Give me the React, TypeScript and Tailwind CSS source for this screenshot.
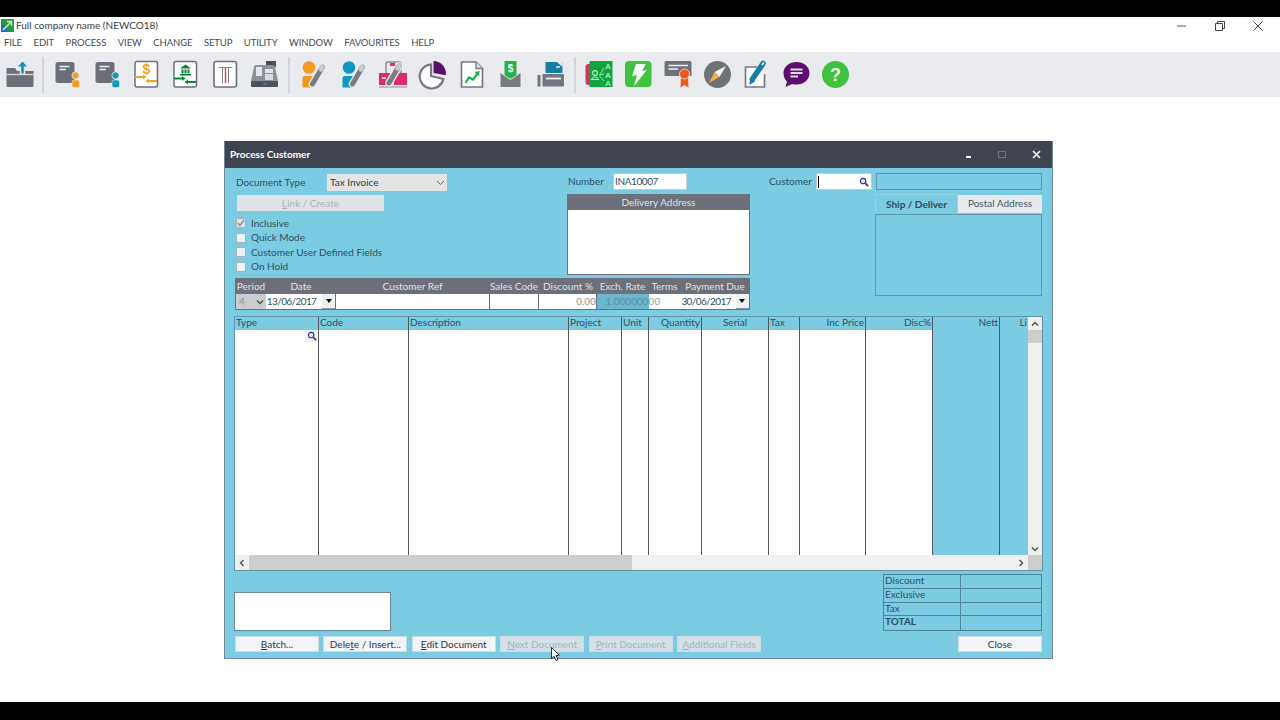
import React from 'react';

const G = '#6c6f78';

const Pencil = ({ x = 0, y = 0 }: { x?: number; y?: number }) => (
  <g transform={`translate(${x} ${y})`}>
    <path d="M16 25 L26 8" stroke="#e9ebef" strokeWidth="7.5" strokeLinecap="round" />
    <path d="M16 25 L26 8" stroke="#7b7d84" strokeWidth="5" strokeLinecap="round" />
    <path d="M24.5 10.5 L26 8" stroke="#c9cbd0" strokeWidth="4.5" strokeLinecap="round" />
  </g>
);

function DocPerson({ color }: { color: string }) {
  return (
    <>
      <rect x="3.5" y="3" width="19" height="21" rx="2.5" fill={G} />
      <path d="M7.5 7.5 H17.5 M7.5 10.5 H14" stroke="#e8eaee" strokeWidth="1.6" />
      <circle cx="23.5" cy="16.5" r="3.6" fill={color} stroke="#e9ebef" strokeWidth="0.8" />
      <rect x="20" y="21" width="7.5" height="7.5" rx="2" fill={color} stroke="#e9ebef" strokeWidth="0.6" />
    </>
  );
}

function PersonPencil({ color }: { color: string }) {
  return (
    <>
      <circle cx="11" cy="8.5" r="6.3" fill={color} />
      <path d="M4.5 19 Q4.5 17 6.5 17 H16 L14 28.5 H4.5z" fill={color} />
      <Pencil x={-1.5} y={0} />
    </>
  );
}

const icons: Record<string, React.ReactNode> = {
  folder: (
    <>
      <path d="M2.5 9 H11 L13 12 H29.5 V27 Q29.5 28 28.5 28 H3.5 Q2.5 28 2.5 27z" fill={G} />
      <path d="M2.5 15.5 H29.5" stroke="#d5d7dc" strokeWidth="1.4" />
      <path d="M18.5 15 V6" stroke="#e9ebef" strokeWidth="5.5" />
      <path d="M18.5 14.5 V6" stroke="#1a8db4" strokeWidth="2.6" />
      <path d="M14 7.5 L18.5 2.5 L23 7.5z" fill="#1a8db4" />
    </>
  ),
  docOrange: <DocPerson color="#f39a1f" />,
  docBlue: <DocPerson color="#1297bd" />,
  dollar: (
    <>
      <rect x="4" y="2.5" width="22.5" height="25.5" rx="2" fill="#fff" stroke={G} strokeWidth="1.5" />
      <text x="15.5" y="15" textAnchor="middle" fontSize="14" fontWeight="700" fill="#f2a51e" fontFamily="Liberation Sans">$</text>
      <path d="M4 18 H13 M17 22 H26" stroke="#f2a51e" strokeWidth="2" />
      <path d="M12 15.5 L15.5 18 L12 20.5z M18 19.5 L14.5 22 L18 24.5z" fill="#f2a51e" />
    </>
  ),
  bank: (
    <>
      <rect x="4" y="2.5" width="22.5" height="25.5" rx="2" fill="#fff" stroke={G} strokeWidth="1.5" />
      <path d="M10 9.5 L15.5 5.5 L21 9.5z M10 15 H21 V16.5 H10z M11.5 10.5 H13.5 V14.5 H11.5z M14.5 10.5 H16.5 V14.5 H14.5z M17.5 10.5 H19.5 V14.5 H17.5z" fill="#0b7d2e" />
      <path d="M4 19.5 H13 M17 23 H26" stroke="#0b8a32" strokeWidth="2" />
      <path d="M12 17 L15.5 19.5 L12 22z M18 20.5 L14.5 23 L18 25.5z" fill="#0b8a32" />
    </>
  ),
  tee: (
    <>
      <rect x="4" y="2.5" width="22.5" height="25.5" rx="2" fill="#fff" stroke={G} strokeWidth="1.6" />
      <path d="M8.5 8.5 H22.5 M12.5 9 V24 M18.5 9 V24" stroke="#80838a" strokeWidth="1" />
      <path d="M15.5 9 V24" stroke="#d9433f" strokeWidth="1.4" />
    </>
  ),
  till: (
    <>
      <rect x="17" y="2" width="10" height="6" fill="#4a4d55" />
      <path d="M5 8 Q5 6 7 6 H24 Q26 6 26 8 L29 22 H2z" fill="#8d9097" />
      <rect x="7" y="8" width="6" height="9" fill="#e4e6ea" />
      <rect x="16" y="10" width="8" height="4" fill="#e4e6ea" />
      <rect x="16" y="15" width="8" height="6" fill="#d8dbe0" />
      <rect x="2" y="22" width="27" height="6" rx="1" fill="#4f5259" />
      <rect x="14" y="24" width="4" height="1.6" fill="#1a8db4" />
    </>
  ),
  personOrange: <PersonPencil color="#f39a1f" />,
  personBlue: <PersonPencil color="#1297bd" />,
  boxes: (
    <>
      <rect x="9" y="3" width="15" height="12" rx="2" fill="#e6e7ea" stroke="#8a8c92" strokeWidth="1.4" />
      <rect x="13" y="4" width="5" height="3" fill="#d8316d" />
      <rect x="2" y="14" width="13" height="12" fill="#df2b6c" />
      <rect x="17" y="14" width="13" height="12" fill="#df2b6c" />
      <rect x="5" y="18" width="4" height="2" fill="#f7c8d9" />
      <path d="M2 28 H30" stroke="#8a8c92" strokeWidth="1" />
      <Pencil x={-4} y={-1} />
    </>
  ),
  pie: (
    <>
      <path d="M15 5.5 A12 12 0 1 0 27.4 20 L15 17z" fill="#fff" stroke="#77797f" strokeWidth="2.2" />
      <path d="M17.5 2 A12.5 12.5 0 0 1 29.8 16.2 L17.5 14z" fill="#5d0f6e" />
    </>
  ),
  chart: (
    <>
      <path d="M5.5 3 H20 L26.5 9.5 V28 H5.5z" fill="#fff" stroke="#777a80" strokeWidth="1.7" strokeLinejoin="round" />
      <path d="M20 3 V9.5 H26.5" fill="#dfe1e5" stroke="#777a80" strokeWidth="1.3" />
      <path d="M9.5 24 L13 18.5 L17 20.5 L22 14" stroke="#22b14c" strokeWidth="2.2" fill="none" />
      <path d="M18.5 13 L23.5 12 L23.2 17.5z" fill="#22b14c" />
    </>
  ),
  envelope: (
    <>
      <path d="M5.5 14 L15.5 21 L25.5 14 V28 H5.5z" fill="#777a80" />
      <path d="M9.5 2 H21.5 V16 L15.5 20 L9.5 16z" fill="#25b24a" />
      <text x="15.5" y="13" textAnchor="middle" fontSize="10" fontWeight="700" fill="#fff" fontFamily="Liberation Sans">$</text>
    </>
  ),
  printer: (
    <>
      <path d="M10.5 3 H27.5 V14 H10.5z" fill="#137fa6" />
      <path d="M22 3 H27.5 V8z" fill="#e9ebef" />
      <path d="M21 8 H25" stroke="#fff" strokeWidth="1.3" />
      <rect x="7.5" y="15" width="21.5" height="12.5" rx="1" fill="#72757d" />
      <rect x="2.5" y="16" width="3" height="11.5" fill="#72757d" />
      <path d="M11 19.5 H26" stroke="#f0f1f3" strokeWidth="1.8" />
    </>
  ),
  book: (
    <>
      <rect x="1.5" y="5" width="8" height="21" rx="3" fill="#c8385f" />
      <rect x="5.5" y="2" width="23" height="26" fill="#12a53e" />
      <circle cx="11" cy="14" r="2.4" fill="none" stroke="#b7f0c6" strokeWidth="1.1" />
      <path d="M7.5 20.5 Q11 15 14.5 20.5z" fill="none" stroke="#b7f0c6" strokeWidth="1.1" />
      <path d="M15.5 16 L20 9 M15.5 16 L20 15 M15.5 17 L20 22" stroke="#b7f0c6" strokeWidth="0.8" />
      <text x="24" y="10" textAnchor="middle" fontSize="8" fill="#d7f7df" fontFamily="Liberation Sans">A</text>
      <text x="24" y="18.5" textAnchor="middle" fontSize="8" fill="#d7f7df" fontFamily="Liberation Sans">A</text>
      <text x="24" y="27" textAnchor="middle" fontSize="8" fill="#d7f7df" fontFamily="Liberation Sans">A</text>
    </>
  ),
  bolt: (
    <>
      <rect x="2" y="2" width="26.5" height="26" rx="4" fill="#3ec23f" />
      <path d="M13 5 H23 L19 12 L24 11 L11 27 L14 16 L9 17z" fill="#fff" />
    </>
  ),
  cert: (
    <>
      <path d="M1.5 3.5 Q1.5 2 3 2 H27 Q28.5 2 28.5 3.5 V17 H1.5z" fill="#6f7279" />
      <path d="M5.5 6.5 H25 M5.5 10 H15" stroke="#f1f2f4" strokeWidth="1.6" />
      <path d="M18 18 L17.5 28.5 L21.5 26 L25.5 28.5 L25 18z" fill="#ec5a19" />
      <circle cx="21.5" cy="15" r="5" fill="#ec5a19" stroke="#e9ebef" strokeWidth="0.8" />
    </>
  ),
  compass: (
    <>
      <circle cx="15.5" cy="15.5" r="13.5" fill="#6f7279" />
      <path d="M24 7 L17.5 18 L12.5 13z" fill="#f4f4f4" />
      <path d="M7 24 L12.5 13 L17.5 18z" fill="#f2b04a" />
    </>
  ),
  note: (
    <>
      <path d="M16 8 H4.5 V28 H23.5 V15" fill="#fff" stroke="#777a80" strokeWidth="1.7" />
      <path d="M11.5 20 L22 4.5" stroke="#137fa6" strokeWidth="5.5" strokeLinecap="round" />
      <path d="M21 6 L22.8 3.4" stroke="#ffffff" strokeWidth="1.6" />
      <path d="M8.5 26 L8.8 19 L14 22.5z" fill="#137fa6" />
    </>
  ),
  chat: (
    <>
      <path d="M15.5 3 C8.5 3 2.5 7.5 2.5 14 C2.5 18.5 4.5 21 6 22.5 L4.5 28 L11 25 C21 27.5 28.5 21.5 28.5 14 C28.5 7.5 22.5 3 15.5 3z" fill="#5d0f6e" />
      <path d="M9.5 10.5 H21.5 M9.5 14 H21.5 M9.5 17.5 H17" stroke="#e7d6ea" strokeWidth="1.8" />
    </>
  ),
  help: (
    <>
      <circle cx="15.5" cy="15.5" r="13.5" fill="#3ec23f" />
      <text x="15.5" y="22" textAnchor="middle" fontSize="18" fontWeight="700" fill="#e8f8e4" fontFamily="Liberation Sans">?</text>
    </>
  ),
};

const toolbar = [
  ['folder'],
  ['docOrange', 'docBlue', 'dollar', 'bank', 'tee', 'till'],
  ['personOrange', 'personBlue', 'boxes', 'pie', 'chart', 'envelope', 'printer'],
  ['book', 'bolt', 'cert', 'compass', 'note', 'chat', 'help'],
];

const menus = ['FILE', 'EDIT', 'PROCESS', 'VIEW', 'CHANGE', 'SETUP', 'UTILITY', 'WINDOW', 'FAVOURITES', 'HELP'];

const columns = [
  { label: 'Type', w: 'w-[84px]', align: 'text-left' },
  { label: 'Code', w: 'w-[90px]', align: 'text-left' },
  { label: 'Description', w: 'w-[160px]', align: 'text-left' },
  { label: 'Project', w: 'w-[53px]', align: 'text-left' },
  { label: 'Unit', w: 'w-[27px]', align: 'text-left' },
  { label: 'Quantity', w: 'w-[53px]', align: 'text-right' },
  { label: 'Serial', w: 'w-[67px]', align: 'text-center' },
  { label: 'Tax', w: 'w-[31px]', align: 'text-left' },
  { label: 'Inc Price', w: 'w-[66px]', align: 'text-right' },
  { label: 'Disc%', w: 'w-[67px]', align: 'text-right' },
  { label: 'Nett', w: 'w-[67px]', align: 'text-right', teal: true },
  { label: 'Li', w: 'w-[28px]', align: 'text-right', teal: true },
];

const strip = [
  { label: 'Period', w: 'w-[30px]' },
  { label: 'Date', w: 'w-[70px]' },
  { label: 'Customer Ref', w: 'w-[153px]' },
  { label: 'Sales Code', w: 'w-[50px]' },
  { label: 'Discount %', w: 'w-[58px]' },
  { label: 'Exch. Rate', w: 'w-[51px]' },
  { label: 'Terms', w: 'w-[33px]' },
  { label: 'Payment Due', w: 'w-[68px]' },
];

const Lens = () => (
  <svg width="10" height="10" viewBox="0 0 11 11">
    <circle cx="4.5" cy="4.5" r="3" fill="#dfe8f5" stroke="#2b2f8c" strokeWidth="1.2" />
    <path d="M7 7 L10 10" stroke="#3a3f78" strokeWidth="2" />
  </svg>
);

const DropBtn = () => (
  <span className="w-[13px] h-[15px] bg-[#eef0f2] border-b border-[#8d9aa3] flex items-center justify-center">
    <span className="w-0 h-0 border-l-[3px] border-r-[3px] border-t-[4px] border-l-transparent border-r-transparent border-t-black" />
  </span>
);

const Check = ({ label, checked }: { label: string; checked?: boolean }) => (
  <label className="h-[14.5px] flex items-center gap-[5px]">
    <span className={`w-[10px] h-[10px] border border-[#a9b4ba] flex items-center justify-center ${checked ? 'bg-[#dfe1e3]' : 'bg-[#eef1f3]'}`}>
      {checked && (
        <svg width="8" height="8" viewBox="0 0 8 8"><path d="M1 4 L3 6.5 L7 1" stroke="#8a9096" strokeWidth="1.3" fill="none" /></svg>
      )}
    </span>
    <span>{label}</span>
  </label>
);

const Btn = ({ u, rest, pre = '', off, w = 'w-[84px]' }: { u: string; rest: string; pre?: string; off?: boolean; w?: string }) => (
  <button className={`${w} h-[16px] leading-[15px] border border-[#c9dde6] text-center ${off ? 'bg-[#d3e0e7] text-[#a3b3bc]' : 'bg-[#f2f3f7] text-[#2e3d47]'}`}>
    {pre}<span className="underline">{u}</span>{rest}
  </button>
);

const Chevron = ({ d }: { d: string }) => (
  <svg width="8" height="8" viewBox="0 0 8 8"><path d={d} stroke="#4b5158" strokeWidth="1.4" fill="none" /></svg>
);

export default function App() {
  return (
    <div className="w-[1280px] h-[720px] overflow-hidden bg-black flex flex-col text-[10px] text-[#31505f] font-['Lato',sans-serif] relative">
      <div className="h-[17px] shrink-0" />
      <div className="h-[17px] shrink-0 bg-white flex items-center text-[#3a3d42]">
        <svg width="13" height="13" viewBox="0 0 13 13" className="ml-[1px] mr-[2px]">
          <rect width="13" height="13" fill="#1f9b4a" />
          <rect y="6" width="6" height="7" fill="#1d6fc0" />
          <path d="M2 11 L10 3 M6 2.5 H10.5 V7" stroke="#d6f5a0" strokeWidth="1.5" fill="none" />
        </svg>
        <span>Full company name (NEWCO18)</span>
        <div className="ml-auto flex items-center text-[#4a4d52]">
          <span className="w-[38px] flex justify-center"><svg width="10" height="10" viewBox="0 0 10 10"><path d="M0 5 H9" stroke="#555" /></svg></span>
          <span className="w-[38px] flex justify-center"><svg width="10" height="10" viewBox="0 0 10 10"><path d="M0.5 2.5 H7.5 V9.5 H0.5z M2.5 2.5 V0.5 H9.5 V7.5 H7.5" stroke="#444" fill="none" /></svg></span>
          <span className="w-[38px] mr-[3px] flex justify-center"><svg width="10" height="10" viewBox="0 0 10 10"><path d="M0.5 0.5 L9.5 9.5 M9.5 0.5 L0.5 9.5" stroke="#444" /></svg></span>
        </div>
      </div>
      <div className="h-[18px] shrink-0 bg-white flex items-center gap-[11.5px] pl-[4px] text-[9.5px] tracking-[-0.1px] text-[#444a52]">
        {menus.map(m => <span key={m}>{m}</span>)}
      </div>
      <div className="h-[45px] shrink-0 bg-[#e9ebef] flex items-center">
        {toolbar.map((group, i) => (
          <React.Fragment key={i}>
            {i > 0 && (
              <div className="w-[9.7px] h-[36px] flex justify-center"><div className="w-[2px] h-full bg-[#d2d4d8]" /></div>
            )}
            {group.map((name, j) => (
              <div key={name} className={`${i === 0 && j === 0 ? 'w-[38.4px]' : 'w-[39.4px]'} h-[32px] flex items-center justify-center`}>
                <svg width="31" height="31" viewBox="0 0 31 31">{icons[name]}</svg>
              </div>
            ))}
          </React.Fragment>
        ))}
      </div>

      <div className="h-[605px] shrink-0 bg-white pt-[44px] pl-[224px]">
        <div className="w-[829px] h-[518px] flex flex-col border-x border-b border-[#6d8794] bg-[#7bcbe2]">
          <div className="h-[27px] shrink-0 bg-[#3f4450] flex items-center pl-[5px] text-white font-bold">
            <span>Process Customer</span>
            <div className="ml-auto flex items-center">
              <span className="w-[34px] flex justify-center pt-[5px]"><span className="w-[5px] h-[2px] bg-white" /></span>
              <span className="w-[34px] flex justify-center"><span className="w-[8px] h-[7px] border border-[#6f7480]" /></span>
              <span className="w-[34px] mr-[-1px] flex justify-center">
                <svg width="9" height="9" viewBox="0 0 9 9"><path d="M1 1 L8 8 M8 1 L1 8" stroke="#fff" strokeWidth="1.6" /></svg>
              </span>
            </div>
          </div>

          <div className="flex-1 flex flex-col pl-[10px] pr-[10px]">
            <div className="h-[149px] shrink-0 flex pt-[5px]">
              <div className="w-[516px] shrink-0 flex flex-col">
                <div className="h-[105px] flex">
                  <div className="w-[332px] pl-[1px] pt-[1px]">
                    <div className="h-[17px] flex items-center">
                      <span className="w-[91px]">Document Type</span>
                      <div className="w-[120px] h-[17px] bg-[#e3e4e5] flex items-center justify-between pl-[3px] pr-[2px] text-[#303a42]">
                        Tax Invoice
                        <svg width="9" height="6" viewBox="0 0 9 6"><path d="M1 1 L4.5 4.5 L8 1" stroke="#666" fill="none" /></svg>
                      </div>
                    </div>
                    <button className="mt-[4px] ml-[1px] w-[147px] h-[16px] bg-[#dfe3e6] text-[#aab2b7] text-center">
                      <span className="underline">L</span>ink / Create
                    </button>
                    <div className="mt-[5px] flex flex-col">
                      <Check label="Inclusive" checked />
                      <Check label="Quick Mode" />
                      <Check label="Customer User Defined Fields" />
                      <Check label="On Hold" />
                    </div>
                  </div>
                  <div className="w-[183px]">
                    <div className="h-[17px] flex items-center">
                      <span className="w-[46px] pl-[1px]">Number</span>
                      <div className="w-[74px] h-[17px] bg-white border border-[#c5ccd0] pl-[1px] leading-[15px] tracking-[-0.4px] text-[#31505f]">INA10007</div>
                    </div>
                    <div className="mt-[4px] border border-[#6b7079] bg-white h-[81px]">
                      <div className="h-[15px] leading-[14px] bg-[#6d6f7a] text-[#dfe2e6] text-center">Delivery Address</div>
                    </div>
                  </div>
                </div>
                <div className="w-[515px] h-[32px] border border-[#6d6f7a] bg-[#6d6f7a]">
                  <div className="flex h-[15px]">
                    {strip.map(s => (
                      <span key={s.label} className={`${s.w} text-center leading-[14px] text-[#dfe2e6] whitespace-nowrap`}>{s.label}</span>
                    ))}
                  </div>
                  <div className="flex h-[15px]">
                    <div className="w-[30px] bg-[#c9cdd1] flex items-center justify-between pl-[3px] pr-[2px] text-[#8d949a]">4<Chevron d="M1 2.5 L4 5.5 L7 2.5" /></div>
                    <div className="w-[70px] bg-white flex items-center justify-between pl-[1px] text-[#31505f]"><span className="tracking-[-0.6px]">13/06/2017</span><DropBtn /></div>
                    <div className="w-[153px] bg-white ml-[1px]" />
                    <div className="w-[49px] bg-white ml-[1px]" />
                    <div className="w-[57px] bg-white ml-[1px] text-right leading-[15px] text-[#8d949a]">0.00</div>
                    <div className="w-[52px] bg-[#6ab8d0] ml-[1px] text-right leading-[15px] text-[#5f8ea3]">1.000000</div>
                    <div className="w-[32px] bg-white leading-[15px] text-[#9aa1a6]">00</div>
                    <div className="w-[69px] bg-white flex items-center justify-between pl-[1px] text-[#31505f]"><span className="tracking-[-0.6px]">30/06/2017</span><DropBtn /></div>
                  </div>
                </div>
              </div>

              <div className="ml-[17px] w-[275px] shrink-0 flex flex-col">
                <div className="h-[17px] flex items-center">
                  <span className="w-[48px] shrink-0 pl-[1px]">Customer</span>
                  <div className="w-[56px] shrink-0 h-[17px] bg-white border border-[#c5ccd0] flex items-center justify-between pr-[2px]">
                    <span className="w-[1px] h-[12px] bg-black ml-[1px]" />
                    <Lens />
                  </div>
                  <div className="ml-[4px] w-[166px] shrink-0 h-[17px] border border-[#5f96a8]" />
                </div>
                <div className="mt-[4px] ml-[107px] flex h-[20px] items-start">
                  <div className="w-[83px] h-[20px] border border-[#94d4e6] border-b-0 text-center font-bold leading-[18px] text-[#2e4a57]">Ship / Deliver</div>
                  <div className="w-[84px] h-[18px] bg-[#e6eaf0] text-center leading-[17px] mt-[1px] text-[#46545e]">Postal Address</div>
                </div>
                <div className="ml-[107px] w-[167px] h-[82px] border border-[#5f96a8]" />
              </div>
            </div>

            <div className="mt-[-1px] h-[255px] shrink-0 w-[809px] -ml-[1px] border border-[#5f96a8] flex flex-col">
              <div className="flex-1 flex min-h-0">
                <div className="flex flex-1 min-w-0">
                  {columns.map((c, i) => (
                    <div key={c.label} className={`${c.w} shrink-0 flex flex-col border-r border-[#55585e] last:border-r-0 relative`}>
                      <div className={`h-[13px] leading-[10px] px-[1px] whitespace-nowrap ${c.align}`}>{c.label}</div>
                      <div className={`flex-1 ${c.teal ? '' : 'bg-white'}`} />
                      {i === 0 && (
                        <span className="absolute right-0 top-[13px] w-[13px] h-[12px] bg-[#eef0f2] flex items-center justify-center"><Lens /></span>
                      )}
                    </div>
                  ))}
                </div>
                <div className="w-[14px] shrink-0 bg-[#f0f0f0] flex flex-col items-center justify-between">
                  <div className="w-full flex flex-col items-center">
                    <span className="h-[13px] flex items-center"><Chevron d="M1 5.5 L4 2.5 L7 5.5" /></span>
                    <span className="w-full h-[13px] bg-[#cdcdcd]" />
                  </div>
                  <span className="h-[13px] flex items-center"><Chevron d="M1 2.5 L4 5.5 L7 2.5" /></span>
                </div>
              </div>
              <div className="h-[15px] shrink-0 bg-[#f0f0f0] flex items-center">
                <span className="w-[14px] flex justify-center"><Chevron d="M5.5 1 L2.5 4 L5.5 7" /></span>
                <span className="w-[383px] h-full bg-[#cdcdcd]" />
                <span className="ml-auto w-[14px] flex justify-center"><Chevron d="M2.5 1 L5.5 4 L2.5 7" /></span>
                <span className="w-[14px] h-full bg-[#cdcdcd]" />
              </div>
            </div>

            <div className="h-[60px] shrink-0 flex justify-between items-end -ml-[1px]">
              <div className="w-[157px] h-[39px] bg-white border border-[#6a8a98]" />
              <div className="w-[159px] h-[57px] border border-[#4f8397] grid grid-cols-[77px_1fr] grid-rows-4 leading-[11px]">
                {['Discount', 'Exclusive', 'Tax', 'TOTAL'].map((r, i) => (
                  <React.Fragment key={r}>
                    <div className={`border-r border-[#4f8397] pl-[1px] ${i < 3 ? 'border-b' : 'font-bold'}`}>{r}</div>
                    <div className={`border-[#4f8397] ${i < 3 ? 'border-b' : ''}`} />
                  </React.Fragment>
                ))}
              </div>
            </div>

            <div className="mt-[5px] flex items-center gap-[4.4px]">
              <Btn u="B" rest="atch..." />
              <Btn pre="Dele" u="t" rest="e / Insert..." />
              <Btn u="E" rest="dit Document" />
              <Btn u="N" rest="ext Document" off />
              <Btn u="P" rest="rint Document" off />
              <Btn u="A" rest="dditional Fields" off />
              <Btn u="" rest="Close" pre="" w="w-[84px] ml-auto" />
            </div>
          </div>
        </div>
      </div>

      <svg width="10" height="15" viewBox="0 0 10 15" className="absolute left-[551px] top-[647px]">
        <path d="M0.5 0.5 V11.5 L3 9.3 L5 13.5 L7 12.6 L5 8.6 L8.3 8.3z" fill="#fff" stroke="#1a1a1a" strokeWidth="0.9" />
      </svg>
    </div>
  );
}
